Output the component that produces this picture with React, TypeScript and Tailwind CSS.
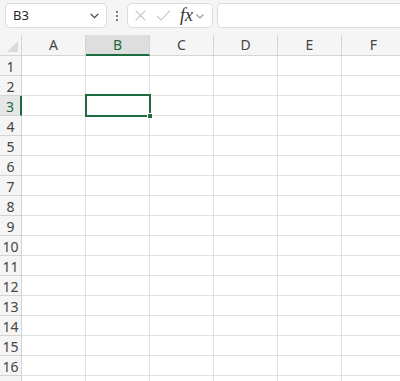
import React from "react";

const cols = ["A", "B", "C", "D", "E", "F"];
const rows = Array.from({ length: 17 }, (_, i) => i + 1);

function Chevron({ className }: { className?: string }) {
  return (
    <svg viewBox="0 0 12 12" className={className} fill="none" stroke="currentColor" strokeWidth="1.2">
      <path d="M2.5 4.5 L6 8 L9.5 4.5" />
    </svg>
  );
}

export default function App() {
  return (
    <div
      className="w-[400px] h-[381px] overflow-hidden bg-white text-[#262626] relative"
      style={{ fontFamily: '"Noto Sans", "Open Sans", sans-serif' }}
    >
      {/* toolbar */}
      <div className="h-[35px] bg-[#f5f5f5] flex items-start pt-[3px] pl-[5px] gap-0">
        <div className="w-[102px] h-[25px] bg-white border border-[#dcdcdc] rounded-[5px] flex items-center pl-[7px] pr-[5px] justify-between">
          <span className="text-[13px] text-[#262626] leading-none">B3</span>
          <Chevron className="w-[13px] h-[13px] text-[#444]" />
        </div>
        <div className="w-[20px] h-[25px] flex flex-col items-center justify-center gap-[2px]">
          <span className="w-[2px] h-[2px] bg-[#555] rounded-full" />
          <span className="w-[2px] h-[2px] bg-[#555] rounded-full" />
          <span className="w-[2px] h-[2px] bg-[#555] rounded-full" />
        </div>
        <div className="w-[86px] h-[25px] bg-white border border-[#dcdcdc] rounded-[5px] flex items-center pl-[6px]">
          <svg viewBox="0 0 12 12" className="w-[13px] h-[13px] text-[#c2c2c2]" fill="none" stroke="currentColor" strokeWidth="1">
            <path d="M1.5 1.5 L10.5 10.5 M10.5 1.5 L1.5 10.5" />
          </svg>
          <svg viewBox="0 0 14 12" className="w-[15px] h-[13px] ml-[9px] text-[#c2c2c2]" fill="none" stroke="currentColor" strokeWidth="1">
            <path d="M1 6.5 L4.8 10.2 L13 1.5" />
          </svg>
          <span
            className="ml-[9px] text-[18px] italic text-[#333] leading-none pb-[2px]"
            style={{ fontFamily: '"Liberation Serif", "DejaVu Serif", serif' }}
          >
            fx
          </span>
          <Chevron className="w-[12px] h-[12px] ml-[1px] text-[#9a9a9a]" />
        </div>
        <div className="ml-[4px] flex-1 h-[25px] bg-white border border-[#dcdcdc] border-r-0 rounded-l-[5px]" />
      </div>

      {/* grid */}
      <div className="grid grid-cols-[22px_64px_64px_64px_64px_64px_64px]">
        {/* header row */}
        <div className="h-[21px] bg-[#f5f5f5] border-r border-b border-[#d4d4d4] relative">
          <svg viewBox="0 0 10 10" className="absolute right-[3px] bottom-[3px] w-[11px] h-[11px]">
            <path d="M10 0 L10 10 L0 10 Z" fill="#dadada" />
          </svg>
        </div>
        {cols.map((c) => {
          const sel = c === "B";
          return (
            <div
              key={c}
              className={
                sel
                  ? "h-[21px] bg-[#dedede] border-r border-[#d4d4d4] border-b-2 border-b-[#1e6b40] flex items-center justify-center text-[14px] text-[#1e6b40] leading-none pt-[1px]"
                  : "h-[21px] bg-[#f5f5f5] border-r border-b border-[#d4d4d4] flex items-center justify-center text-[14px] text-[#444] leading-none"
              }
            >
              {c}
            </div>
          );
        })}
        {rows.map((r) => (
          <React.Fragment key={r}>
            <div
              className={
                r === 3
                  ? "h-[20px] bg-[#e6e6e6] border-r-2 border-r-[#1e6b40] border-b border-[#d4d4d4] flex items-center justify-center text-[14px] text-[#1e6b40] leading-none pt-[2px]"
                  : "h-[20px] bg-[#f5f5f5] border-r border-b border-[#d4d4d4] flex items-center justify-center text-[14px] text-[#444] leading-none pt-[2px]"
              }
            >
              {r <= 16 ? r : ""}
            </div>
            {cols.map((c) => (
              <div key={c} className="h-[20px] border-r border-b border-[#e1e1e1] relative">
                {r === 3 && c === "B" && (
                  <div className="absolute left-[-1px] top-[-2px] w-[66px] h-[23px] border-2 border-[#1e6b40] z-10">
                    <div className="absolute right-[-4px] bottom-[-4px] w-[6px] h-[6px] bg-[#1e6b40] border border-white" />
                  </div>
                )}
              </div>
            ))}
          </React.Fragment>
        ))}
      </div>
    </div>
  );
}
